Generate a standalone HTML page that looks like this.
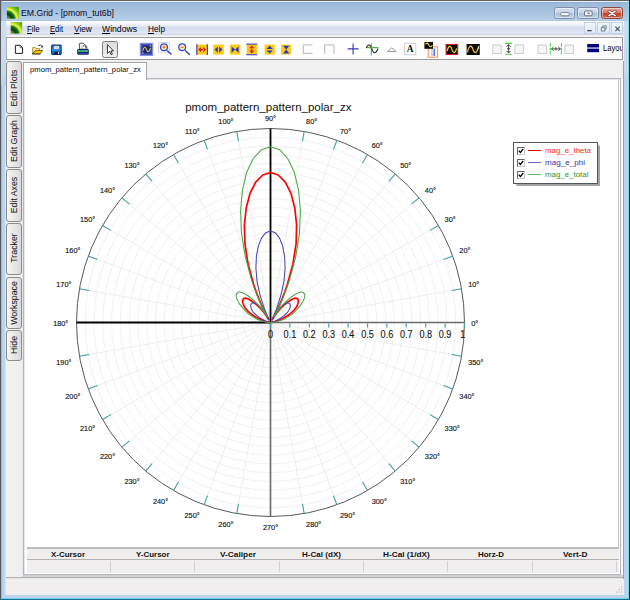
<!DOCTYPE html>
<html><head><meta charset="utf-8"><title>EM.Grid - [pmom_tut6b]</title>
<style>
html,body{margin:0;padding:0;}
body{width:630px;height:600px;overflow:hidden;position:relative;background:#b9d1ea;font-family:"Liberation Sans",sans-serif;font-size:12px;color:#000;}
.abs{position:absolute;}
#frame{left:0;top:0;width:630px;height:600px;background:#bcd3ec;}
#titlegrad{left:1px;top:2px;width:627px;height:19px;background:linear-gradient(#8fb0d4 0%,#9dbad9 10%,#a8c3e0 50%,#b6cfe9 93%,#a9c5e5 100%);}
#title{left:21px;top:5px;font-size:12px;color:#000;white-space:nowrap;letter-spacing:-0.1px;}
#menubar{left:6px;top:21px;width:618px;height:14px;background:linear-gradient(#fdfeff 0%,#f7f9fc 16%,#e6eaf5 34%,#d7ddee 48%,#d9dff0 60%,#e1e7f5 90%,#c6ccde 100%);}
.menu{top:22px;font-size:12px;white-space:nowrap;}
u{text-decoration-thickness:0.8px;text-underline-offset:0.6px;}
#tbwrap{left:6px;top:35px;width:618px;height:26px;background:#f2f2f2;}
#toolbar{left:6px;top:37px;width:616px;height:22px;background:#fff;border:1px solid #9a9a9a;border-top-color:#a0a0a0;border-left-color:#b0b0b0;box-sizing:border-box;height:23px;width:617px;}
#client{left:6px;top:60px;width:618px;height:535px;background:#f0f0f0;}
.vtab{left:6px;width:15.5px;border:1px solid #8c8c8c;border-radius:3px;background:linear-gradient(90deg,#f5f5f5,#dadada);box-sizing:border-box;}

#tab{left:23px;top:62px;width:124px;height:18px;background:#fff;border:1px solid #a4a4ac;border-bottom:none;box-sizing:border-box;}
#tabtxt{left:29px;top:64px;font-size:9.3px;white-space:nowrap;color:#111;}
#pane{left:23px;top:78px;width:598px;height:497px;box-sizing:border-box;border:1px solid #b4b4bc;background:#fff;}
#paneinner{left:26px;top:80px;width:593px;height:468px;box-sizing:border-box;border-right:1px solid #c6c6c6;background:#fff;}
#tblhead{left:27px;top:547px;width:592px;height:12px;background:#f0eded;border-top:2px solid #bcbcbc;box-sizing:border-box;}
#tblrow{left:27px;top:559px;width:592px;height:14px;background:#f0eeee;border-top:1px solid #b2b2b2;box-sizing:border-box;}
.th{top:549px;width:83px;text-align:center;font-weight:bold;font-size:9.6px;line-height:10px;color:#111;white-space:nowrap;}
.cs{top:561px;width:1px;height:11px;background:#d4d0d0;}
#status{left:6px;top:579px;width:618px;height:16px;background:#f0eeee;box-sizing:border-box;}
#legend{left:513px;top:142px;width:85px;height:41.5px;box-sizing:border-box;border:1px solid #555;background:#fff;box-shadow:1.5px 1.5px 1px #a4a4a4;}
.lg{left:18px;font-size:9px;white-space:nowrap;}
.cb{width:7.5px;height:7.5px;border:1px solid #666;border-right-color:#ccc;border-bottom-color:#ccc;box-sizing:border-box;background:#fff;}
.wb{top:7px;height:12px;box-sizing:border-box;border:1px solid #7f90a8;border-radius:2.5px;background:linear-gradient(#d3e0f0 0%,#c3d4ea 45%,#a9c0dd 52%,#b9cee6 100%);box-shadow:inset 0 0 0 1px rgba(255,255,255,0.45);}
.mb{top:22px;height:12px;box-sizing:border-box;border:1px solid #c3d1e2;background:linear-gradient(#f0f5fb,#dfe8f4);}
</style></head><body>
<div class="abs" id="frame"></div>
<div class="abs" id="titlegrad"></div>
<!-- outer borders -->
<div class="abs" style="left:0;top:0;width:630px;height:1px;background:#64625e"></div>
<div class="abs" style="left:0;top:0;width:1px;height:600px;background:#55595d"></div>
<div class="abs" style="left:1px;top:1px;width:627px;height:1px;background:#e4effa"></div>
<div class="abs" style="left:1px;top:1px;width:1px;height:598px;background:#a9b4c2"></div>
<div class="abs" style="left:5px;top:21px;width:1px;height:574px;background:#d9e6f4"></div>
<div class="abs" style="left:1px;top:21px;width:5px;height:65px;background:linear-gradient(#cfdff1,#c6d9ee 80%,#b9d1ea);"></div>
<div class="abs" style="left:624px;top:21px;width:4px;height:65px;background:linear-gradient(#cfdff1,#c6d9ee 80%,#b9d1ea);"></div>
<div class="abs" style="left:629px;top:0;width:1px;height:600px;background:#0e2230"></div>
<div class="abs" style="left:628px;top:1px;width:1px;height:598px;background:#7fd4fb"></div>
<div class="abs" style="left:0;top:599px;width:630px;height:1px;background:#1a6f8f"></div>
<div class="abs" style="left:1px;top:598px;width:628px;height:1px;background:#6fd0f5"></div>

<!-- title icon -->
<svg class="abs" style="left:6px;top:6px" width="14" height="14" viewBox="-1 -1 14 14"><defs><radialGradient id="ig" gradientUnits="userSpaceOnUse" cx="-0.5" cy="12.5" r="16"><stop offset="0" stop-color="#8aa028"/><stop offset="0.2" stop-color="#5c8a1c"/><stop offset="0.3" stop-color="#0a4412"/><stop offset="0.46" stop-color="#0e5a18"/><stop offset="0.55" stop-color="#3aa41e"/><stop offset="0.63" stop-color="#f4f23c"/><stop offset="0.7" stop-color="#d6ec30"/><stop offset="0.8" stop-color="#86cc18"/><stop offset="1" stop-color="#4c9c10"/></radialGradient></defs><rect x="-0.1" y="-0.1" width="12" height="11.8" fill="url(#ig)"/></svg>
<div class="abs" style="left:21.30px;top:9.45px;font-size:8.80px;line-height:1;white-space:nowrap;transform-origin:0 0;transform:scaleX(0.9904);color:#0a0a1e;">EM.Grid - [pmom_tut6b]</div>

<!-- window buttons -->
<div class="abs wb" style="left:554px;width:21px;"></div>
<div class="abs wb" style="left:577px;width:22px;"></div>
<div class="abs wb" style="left:601px;width:22px;border-color:#8a4a42;background:linear-gradient(#e4aa9e 0%,#d67e6c 45%,#c4442e 52%,#cf6048 100%);"></div>
<svg class="abs" style="left:550px;top:5px" width="76" height="16" viewBox="550 5 76 16">
<rect x="560.6" y="12.6" width="8.6" height="3.2" rx="1.2" fill="#fff" stroke="#6c7888" stroke-width="0.9"/>
<rect x="584.6" y="11" width="7.4" height="4.8" rx="0.8" fill="#fff" stroke="#566272" stroke-width="0.9"/>
<rect x="587.2" y="12.5" width="2.8" height="1.6" fill="#7f93b4"/>
<path d="M609 11.2 L615.2 15.6 M615.2 11.2 L609 15.6" stroke="#7a3028" stroke-width="2.8" stroke-linecap="round"/>
<path d="M609 11.2 L615.2 15.6 M615.2 11.2 L609 15.6" stroke="#fff" stroke-width="1.5" stroke-linecap="round"/>
</svg>
<!-- menubar -->
<div class="abs" id="menubar"></div>
<svg class="abs" style="left:10px;top:21px" width="14" height="14" viewBox="-1 -1 14 14"><rect x="-0.3" y="0.1" width="11.4" height="11.5" fill="url(#ig)"/></svg>
<div class="abs" style="left:27.40px;top:24.55px;font-size:8.80px;line-height:1;white-space:nowrap;transform-origin:0 0;transform:scaleX(0.8956);"><u>F</u>ile</div>
<div class="abs" style="left:49.70px;top:24.55px;font-size:8.80px;line-height:1;white-space:nowrap;transform-origin:0 0;transform:scaleX(0.8705);"><u>E</u>dit</div>
<div class="abs" style="left:74.10px;top:24.55px;font-size:8.80px;line-height:1;white-space:nowrap;transform-origin:0 0;transform:scaleX(0.9410);"><u>V</u>iew</div>
<div class="abs" style="left:102.00px;top:24.55px;font-size:8.80px;line-height:1;white-space:nowrap;transform-origin:0 0;transform:scaleX(0.9804);"><u>W</u>indows</div>
<div class="abs" style="left:148.00px;top:24.55px;font-size:8.80px;line-height:1;white-space:nowrap;transform-origin:0 0;transform:scaleX(0.9393);"><u>H</u>elp</div>
<!-- mdi buttons -->
<div class="abs mb" style="left:584px;width:12px;"></div>
<div class="abs mb" style="left:597px;width:13px;"></div>
<div class="abs mb" style="left:611px;width:12px;"></div>
<svg class="abs" style="left:584px;top:22px" width="40" height="13" viewBox="584 22 40 13">
<rect x="587.2" y="30" width="4.4" height="1.3" fill="#3c4c60"/>
<path d="M602.6 27.4 V25.9 H606.2 V29 H604.8 M601.3 27.6 H604.8 V31.1 H601.3 Z" fill="none" stroke="#64748c" stroke-width="0.85"/>
<path d="M615.4 26.6 L619.8 31.1 M619.8 26.6 L615.4 31.1" stroke="#44546a" stroke-width="1.15"/>
</svg>
<!-- toolbar -->
<div class="abs" id="tbwrap"></div>
<div class="abs" id="toolbar"></div>
<div class="abs" style="left:101.5px;top:40.5px;width:16.5px;height:17px;box-sizing:border-box;border:1px solid #7c7c7c;border-radius:2.5px;background:linear-gradient(#dcdcdc,#f0f0f0);"></div>
<svg class="abs" style="left:0;top:36px" width="630" height="26" viewBox="0 36 630 26">
<!-- new -->
<path d="M15.4 45.3 H20.2 L22.6 47.7 V53.4 H15.4 Z" fill="#fff" stroke="#222" stroke-width="1"/>
<path d="M20.2 45.3 V47.7 H22.6" fill="none" stroke="#444" stroke-width="0.8"/>
<!-- open -->
<path d="M32.6 53.6 V47.6 H35.4 L36.2 48.6 H39.6 V50.6" fill="#fae690" stroke="#8a7410" stroke-width="0.7" stroke-linejoin="round"/>
<path d="M32.4 53.8 L35 50.8 L42.6 50.3 L40.2 53.8 Z" fill="#f2ca08" stroke="#4a3a00" stroke-width="0.7" stroke-linejoin="round"/>
<path d="M32.2 54.1 H40.4" stroke="#2a2000" stroke-width="0.7"/>
<path d="M38.2 45.6 Q40.6 44.2 42.2 46.4" fill="none" stroke="#222" stroke-width="0.9"/>
<path d="M42.9 45.2 V47.4 H40.8 Z" fill="#111"/>
<!-- save -->
<defs><linearGradient id="sv" x1="0" y1="0" x2="0" y2="1"><stop offset="0" stop-color="#1a6ccc"/><stop offset="0.55" stop-color="#2294e4"/><stop offset="1" stop-color="#0c3cb0"/></linearGradient></defs>
<rect x="51.6" y="45" width="9.6" height="9.5" rx="0.6" fill="url(#sv)" stroke="#0c1c5c" stroke-width="0.9"/>
<rect x="54" y="46" width="5" height="3" fill="#f2f2f2" stroke="#9aa4b4" stroke-width="0.4"/>
<rect x="55.2" y="47.2" width="2.6" height="0.6" fill="#b0b0b0"/>
<rect x="54.6" y="51.7" width="5.2" height="2.8" fill="#1c1c2c"/>
<rect x="58" y="52.1" width="1.1" height="2" fill="#f0f0f0"/>
<!-- print -->
<path d="M79.4 49.2 V44 Q79.4 43.2 80.2 43.2 H83.4 L86.8 46.6 V49.2 Z" fill="#f4f4f4" stroke="#2a2a2a" stroke-width="0.8" stroke-linejoin="round"/>
<rect x="83.3" y="45.3" width="1.1" height="1.1" fill="#111"/><rect x="85" y="46.4" width="1.1" height="1.1" fill="#111"/>
<rect x="81" y="45.6" width="1.6" height="2.4" fill="#d8d8d8"/>
<rect x="77.2" y="49" width="11.6" height="5.7" rx="1.2" fill="#14205e"/>
<rect x="77.8" y="50.1" width="10.4" height="1.8" fill="#2cc07c"/>
<rect x="85.4" y="50.2" width="1.5" height="1.6" fill="#9a8cb8"/>
<rect x="78" y="53" width="10" height="0.8" fill="#3454c4"/>
<!-- pointer -->
<path d="M107.4 44.6 V53.4 L109.6 51.4 L111.2 54.8 L112.4 54.2 L110.9 50.9 H113.6 Z" fill="#fff" stroke="#222" stroke-width="0.9" stroke-linejoin="round"/>
<!-- sine blue -->
<rect x="140.5" y="43.5" width="12" height="11.8" fill="#18248e" stroke="#8290ec" stroke-width="1.5"/>
<rect x="142" y="45" width="9" height="8.8" fill="none" stroke="#6a74b4" stroke-width="0.5"/>
<path d="M142.8 50.8 C143.6 46.4 145.6 46.2 146.5 49.4 C147.4 52.8 149.4 52.8 150.3 48.2" fill="none" stroke="#f0cc18" stroke-width="1.05"/>
<rect x="142.2" y="52.4" width="1.4" height="1.1" fill="#f0cc18"/><rect x="149.6" y="45.4" width="1.4" height="1.1" fill="#f0cc18"/>
<!-- zoom in -->
<rect x="158.6" y="42.6" width="10.8" height="9.6" fill="#fafafa" stroke="#d0d0d0" stroke-width="0.8"/>
<circle cx="164" cy="47.2" r="3.4" fill="#fff0c4" stroke="#3446d4" stroke-width="1.3"/>
<path d="M162.4 47.2 H165.6 M164 45.6 V48.8" stroke="#f07818" stroke-width="1.2"/>
<path d="M166.6 50 L168 51.4" stroke="#30a040" stroke-width="1.4"/>
<path d="M167.8 51.2 L171.4 54.6" stroke="#2c3cc8" stroke-width="1.4"/>
<!-- zoom out -->
<circle cx="182.2" cy="47.2" r="3.4" fill="#fff0c4" stroke="#3446d4" stroke-width="1.3"/>
<path d="M180.6 47.2 H183.8" stroke="#f07818" stroke-width="1.2"/>
<path d="M184.8 50 L186.2 51.4" stroke="#30a040" stroke-width="1.4"/>
<path d="M186 51.2 L189.8 54.8" stroke="#2c3cc8" stroke-width="1.4"/>
<!-- yellow icons -->
<rect x="196.5" y="44.6" width="11.3" height="10" fill="#fcca18"/>
<rect x="196.3" y="44.2" width="1.2" height="10.8" fill="#3c48c8"/><rect x="206.8" y="44.2" width="1.2" height="10.8" fill="#3c48c8"/>
<path d="M198.2 49.6 L201 47 V52.2 Z M206 49.6 L203.2 47 V52.2 Z M200.5 49 H204 V50.2 H200.5 Z" fill="#e01818"/>
<rect x="213.2" y="44.6" width="10.6" height="10" fill="#fcca18"/>
<path d="M214.6 49.6 L217.8 46.4 V52.8 Z M222.4 49.6 L219.2 46.4 V52.8 Z" fill="#2838c8"/>
<rect x="229.8" y="44.6" width="10.6" height="10" fill="#fcca18"/>
<path d="M231.6 46.4 L235.1 49.6 L231.6 52.8 Z M238.6 46.4 L235.1 49.6 L238.6 52.8 Z" fill="#2838c8"/>
<rect x="246.7" y="44" width="10.2" height="10.8" fill="#fcca18"/>
<rect x="246.2" y="43.6" width="11.2" height="1.1" fill="#3c48c8"/><rect x="246.2" y="54.2" width="11.2" height="1.1" fill="#3c48c8"/>
<path d="M251.8 45.4 L249.2 48.2 H254.4 Z M251.8 53.4 L249.2 50.6 H254.4 Z M251.2 47.8 H252.4 V51 H251.2 Z" fill="#e01818"/>
<rect x="264.6" y="44.6" width="10.2" height="10" fill="#fcca18"/>
<path d="M269.7 45.8 L266.4 49 H273 Z M269.7 53.6 L266.4 50.4 H273 Z" fill="#2838c8"/>
<rect x="281.1" y="44.6" width="10.2" height="10" fill="#fcca18"/>
<path d="M283 45.8 H289.4 L286.2 49.6 Z M283 53.6 H289.4 L286.2 49.6 Z" fill="#2838c8"/>
<!-- brackets -->
<path d="M312.5 44.9 H303.3 V53.4 H312.5" fill="none" stroke="#b4b4b4" stroke-width="1"/>
<path d="M324.7 53.8 V44.9 H334 V53.8" fill="none" stroke="#b4b4b4" stroke-width="1"/>
<!-- plus -->
<path d="M347.6 48.9 H358.6 M353.1 43.4 V54.4" stroke="#3434b8" stroke-width="1.1"/>
<!-- axes sine -->
<path d="M371.3 43.6 V55.6 M366 47.6 H378.4" stroke="#38c050" stroke-width="1.1"/>
<path d="M366.2 47.8 C367.6 44.4 369.6 44 371 47 C372.6 51 373.6 53.6 375.6 52.4 C376.8 51.6 377.4 50 378 48.6" fill="none" stroke="#222" stroke-width="1.1"/>
<rect x="370.5" y="46.8" width="1.7" height="1.7" fill="#f08020"/>
<!-- triangle -->
<path d="M387.4 51.6 L391.8 47.8 L396.2 51.6 Z" fill="none" stroke="#8c8c8c" stroke-width="0.9"/>
<!-- A box -->
<rect x="404.6" y="43.3" width="11.2" height="11.5" fill="#fff" stroke="#c8c8c8" stroke-width="0.9"/>
<text x="410.2" y="52.4" font-family="Liberation Serif, serif" font-weight="bold" font-size="9.4" text-anchor="middle" fill="#111">A</text>
<!-- black/orange -->
<rect x="428.2" y="46.8" width="9.4" height="10.4" fill="#fff" stroke="#f09050" stroke-width="1"/>
<path d="M432 48.6 V56" stroke="#a8b4f0" stroke-width="1.2"/><path d="M434.2 48.6 V56" stroke="#3c48c8" stroke-width="1.2"/>
<rect x="424.4" y="42" width="8.6" height="6.8" fill="#0a0a0a"/>
<path d="M425.4 44.4 C426.6 42.4 427.8 42.8 428.6 44.8 C429.6 47.2 431 47.4 432.4 45.4" fill="none" stroke="#f0d020" stroke-width="1.1"/>
<!-- red sine box -->
<rect x="446.1" y="44.5" width="11.6" height="10" fill="#0a0a0a" stroke="#d42020" stroke-width="1.1"/>
<path d="M447.2 51 C448.4 45.4 450.6 45 451.8 49.2 C453 53.6 455.2 54 456.6 48.4" fill="none" stroke="#e8d020" stroke-width="1.2"/>
<!-- black sine box -->
<rect x="466.6" y="44" width="13.2" height="11" fill="#0a0a0a"/>
<path d="M467.4 52.4 C469 45 471.4 44.6 472.8 49 C474.4 54 476.8 54 478.6 46.6" fill="none" stroke="#e8b820" stroke-width="1.3"/>
<path d="M470 47.2 C470.8 45.6 471.6 46 472.2 47.6 M477.6 49.6 L479 46" fill="none" stroke="#f4f4f4" stroke-width="0.8"/>
<!-- small squares and arrows -->
<rect x="492.8" y="45" width="8.4" height="8.4" fill="#f6f6f6" stroke="#c6c6c6" stroke-width="0.9"/>
<rect x="514.9" y="45" width="8.4" height="8.4" fill="#f6f6f6" stroke="#c6c6c6" stroke-width="0.9"/>
<rect x="538" y="45" width="8.4" height="8.4" fill="#f6f6f6" stroke="#c6c6c6" stroke-width="0.9"/>
<rect x="564.9" y="45" width="8.4" height="8.4" fill="#f6f6f6" stroke="#c6c6c6" stroke-width="0.9"/>
<path d="M505 43.4 H512.2 M505 54.2 H512.2" stroke="#40d040" stroke-width="1.1"/>
<path d="M508.6 44.8 V52.8 M506.6 46.8 L508.6 44.6 L510.6 46.8 M506.6 50.8 L508.6 53 L510.6 50.8 M506.9 48.8 H510.3" fill="none" stroke="#333" stroke-width="0.9"/>
<path d="M550.3 43.6 V54.2 M561.4 43.6 V54.2" stroke="#40d040" stroke-width="1.1" stroke-dasharray="3 0.8"/>
<path d="M551.6 48.9 H560.2 M553.6 46.9 L551.5 48.9 L553.6 50.9 M558.2 46.9 L560.3 48.9 L558.2 50.9 M555.9 47.2 V50.6" fill="none" stroke="#333" stroke-width="0.9"/>
<!-- navy bars -->
<rect x="587.2" y="44" width="11.8" height="3.5" fill="#00007c"/><rect x="587.2" y="48.6" width="11.8" height="3.6" fill="#00007c"/>
</svg>
<div class="abs" style="left:600px;top:40px;width:22px;height:16px;overflow:hidden"><div class="abs" style="left:2.60px;top:3.75px;font-size:8.80px;line-height:1;white-space:nowrap;transform-origin:0 0;transform:scaleX(0.8591);">Layou</div><span style="position:absolute;left:23.6px;top:3.75px;font-size:8.8px;line-height:1">t</span></div>


<!-- client -->
<div class="abs" id="client"></div>
<div class="abs vtab" style="top:61px;height:53px"></div>
<div class="abs" style="left:13.8px;top:88.00px;font-size:8.76px;line-height:1;white-space:nowrap;color:#111;transform:translate(-50%,-50%) rotate(-90deg) scaleX(1.0000)">Edit Plots</div>
<div class="abs vtab" style="top:115px;height:53px"></div>
<div class="abs" style="left:13.8px;top:141.30px;font-size:8.76px;line-height:1;white-space:nowrap;color:#111;transform:translate(-50%,-50%) rotate(-90deg) scaleX(1.0000)">Edit Graph</div>
<div class="abs vtab" style="top:169px;height:52.5px"></div>
<div class="abs" style="left:13.8px;top:195.10px;font-size:8.76px;line-height:1;white-space:nowrap;color:#111;transform:translate(-50%,-50%) rotate(-90deg) scaleX(1.0000)">Edit Axes</div>
<div class="abs vtab" style="top:223px;height:52px"></div>
<div class="abs" style="left:13.8px;top:248.40px;font-size:8.76px;line-height:1;white-space:nowrap;color:#111;transform:translate(-50%,-50%) rotate(-90deg) scaleX(1.0000)">Tracker</div>
<div class="abs vtab" style="top:276.5px;height:52px"></div>
<div class="abs" style="left:13.8px;top:302.60px;font-size:8.76px;line-height:1;white-space:nowrap;color:#111;transform:translate(-50%,-50%) rotate(-90deg) scaleX(1.0000)">Workspace</div>
<div class="abs vtab" style="top:330px;height:31px"></div>
<div class="abs" style="left:13.8px;top:345.30px;font-size:8.76px;line-height:1;white-space:nowrap;color:#111;transform:translate(-50%,-50%) rotate(-90deg) scaleX(1.0000)">Hide</div>

<div class="abs" style="left:22px;top:575px;width:601px;height:2px;background:#d0d0d0"></div>
<div class="abs" style="left:6px;top:577px;width:618px;height:1px;background:#b2b2b2"></div>
<div class="abs" style="left:6px;top:578px;width:618px;height:1px;background:#e4e4e4"></div>
<div class="abs" style="left:22px;top:79px;width:1px;height:497px;background:#e6e6ea"></div>
<div class="abs" style="left:621px;top:79px;width:2px;height:496px;background:#f8f8f8"></div>
<div class="abs" style="left:623px;top:61px;width:1px;height:534px;background:#a0a0a0"></div>
<div class="abs" id="pane"></div>
<div class="abs" style="left:24px;top:79px;width:1px;height:495px;background:#e8e8ec"></div>
<div class="abs" style="left:24px;top:79px;width:596px;height:1px;background:#e4e4e8"></div>
<div class="abs" id="tab"></div>
<div class="abs" style="left:29.70px;top:66.41px;font-size:7.90px;line-height:1;white-space:nowrap;transform-origin:0 0;transform:scaleX(0.9721);color:#0a0a18;">pmom_pattern_pattern_polar_zx</div>
<div class="abs" id="paneinner"></div>
<svg width="630" height="600" viewBox="0 0 630 600" style="position:absolute;left:0;top:0" font-family="Liberation Sans, sans-serif">
<circle cx="270.5" cy="322.5" r="185.24" fill="none" stroke="#eeeeee" stroke-width="0.8"/>
<circle cx="270.5" cy="322.5" r="176.48" fill="none" stroke="#eeeeee" stroke-width="0.8"/>
<circle cx="270.5" cy="322.5" r="167.72" fill="none" stroke="#eeeeee" stroke-width="0.8"/>
<circle cx="270.5" cy="322.5" r="158.96" fill="none" stroke="#eeeeee" stroke-width="0.8"/>
<circle cx="270.5" cy="322.5" r="150.20" fill="none" stroke="#eeeeee" stroke-width="0.8"/>
<circle cx="270.5" cy="322.5" r="141.44" fill="none" stroke="#eeeeee" stroke-width="0.8"/>
<circle cx="270.5" cy="322.5" r="132.68" fill="none" stroke="#eeeeee" stroke-width="0.8"/>
<circle cx="270.5" cy="322.5" r="123.92" fill="none" stroke="#eeeeee" stroke-width="0.8"/>
<circle cx="270.5" cy="322.5" r="115.16" fill="none" stroke="#eeeeee" stroke-width="0.8"/>
<circle cx="270.5" cy="322.5" r="106.40" fill="none" stroke="#eeeeee" stroke-width="0.8"/>
<circle cx="270.5" cy="322.5" r="97.64" fill="none" stroke="#eeeeee" stroke-width="0.8"/>
<circle cx="270.5" cy="322.5" r="88.88" fill="none" stroke="#eeeeee" stroke-width="0.8"/>
<circle cx="270.5" cy="322.5" r="80.12" fill="none" stroke="#eeeeee" stroke-width="0.8"/>
<circle cx="270.5" cy="322.5" r="71.36" fill="none" stroke="#eeeeee" stroke-width="0.8"/>
<circle cx="270.5" cy="322.5" r="62.60" fill="none" stroke="#eeeeee" stroke-width="0.8"/>
<circle cx="270.5" cy="322.5" r="53.84" fill="none" stroke="#eeeeee" stroke-width="0.8"/>
<circle cx="270.5" cy="322.5" r="45.08" fill="none" stroke="#eeeeee" stroke-width="0.8"/>
<circle cx="270.5" cy="322.5" r="36.32" fill="none" stroke="#eeeeee" stroke-width="0.8"/>
<circle cx="270.5" cy="322.5" r="27.56" fill="none" stroke="#eeeeee" stroke-width="0.8"/>
<circle cx="270.5" cy="322.5" r="18.80" fill="none" stroke="#eeeeee" stroke-width="0.8"/>
<circle cx="270.5" cy="322.5" r="10.04" fill="none" stroke="#eeeeee" stroke-width="0.8"/>
<circle cx="270.5" cy="322.5" r="1.28" fill="none" stroke="#eeeeee" stroke-width="0.8"/>
<line x1="270.5" y1="322.5" x2="461.6" y2="288.8" stroke="#eaeaea" stroke-width="0.8"/>
<line x1="270.5" y1="322.5" x2="452.8" y2="256.1" stroke="#eaeaea" stroke-width="0.8"/>
<line x1="270.5" y1="322.5" x2="438.5" y2="225.5" stroke="#eaeaea" stroke-width="0.8"/>
<line x1="270.5" y1="322.5" x2="419.1" y2="197.8" stroke="#eaeaea" stroke-width="0.8"/>
<line x1="270.5" y1="322.5" x2="395.2" y2="173.9" stroke="#eaeaea" stroke-width="0.8"/>
<line x1="270.5" y1="322.5" x2="367.5" y2="154.5" stroke="#eaeaea" stroke-width="0.8"/>
<line x1="270.5" y1="322.5" x2="336.9" y2="140.2" stroke="#eaeaea" stroke-width="0.8"/>
<line x1="270.5" y1="322.5" x2="304.2" y2="131.4" stroke="#eaeaea" stroke-width="0.8"/>
<line x1="270.5" y1="322.5" x2="236.8" y2="131.4" stroke="#eaeaea" stroke-width="0.8"/>
<line x1="270.5" y1="322.5" x2="204.1" y2="140.2" stroke="#eaeaea" stroke-width="0.8"/>
<line x1="270.5" y1="322.5" x2="173.5" y2="154.5" stroke="#eaeaea" stroke-width="0.8"/>
<line x1="270.5" y1="322.5" x2="145.8" y2="173.9" stroke="#eaeaea" stroke-width="0.8"/>
<line x1="270.5" y1="322.5" x2="121.9" y2="197.8" stroke="#eaeaea" stroke-width="0.8"/>
<line x1="270.5" y1="322.5" x2="102.5" y2="225.5" stroke="#eaeaea" stroke-width="0.8"/>
<line x1="270.5" y1="322.5" x2="88.2" y2="256.1" stroke="#eaeaea" stroke-width="0.8"/>
<line x1="270.5" y1="322.5" x2="79.4" y2="288.8" stroke="#eaeaea" stroke-width="0.8"/>
<line x1="270.5" y1="322.5" x2="79.4" y2="356.2" stroke="#eaeaea" stroke-width="0.8"/>
<line x1="270.5" y1="322.5" x2="88.2" y2="388.9" stroke="#eaeaea" stroke-width="0.8"/>
<line x1="270.5" y1="322.5" x2="102.5" y2="419.5" stroke="#eaeaea" stroke-width="0.8"/>
<line x1="270.5" y1="322.5" x2="121.9" y2="447.2" stroke="#eaeaea" stroke-width="0.8"/>
<line x1="270.5" y1="322.5" x2="145.8" y2="471.1" stroke="#eaeaea" stroke-width="0.8"/>
<line x1="270.5" y1="322.5" x2="173.5" y2="490.5" stroke="#eaeaea" stroke-width="0.8"/>
<line x1="270.5" y1="322.5" x2="204.1" y2="504.8" stroke="#eaeaea" stroke-width="0.8"/>
<line x1="270.5" y1="322.5" x2="236.8" y2="513.6" stroke="#eaeaea" stroke-width="0.8"/>
<line x1="270.5" y1="322.5" x2="304.2" y2="513.6" stroke="#eaeaea" stroke-width="0.8"/>
<line x1="270.5" y1="322.5" x2="336.9" y2="504.8" stroke="#eaeaea" stroke-width="0.8"/>
<line x1="270.5" y1="322.5" x2="367.5" y2="490.5" stroke="#eaeaea" stroke-width="0.8"/>
<line x1="270.5" y1="322.5" x2="395.2" y2="471.1" stroke="#eaeaea" stroke-width="0.8"/>
<line x1="270.5" y1="322.5" x2="419.1" y2="447.2" stroke="#eaeaea" stroke-width="0.8"/>
<line x1="270.5" y1="322.5" x2="438.5" y2="419.5" stroke="#eaeaea" stroke-width="0.8"/>
<line x1="270.5" y1="322.5" x2="452.8" y2="388.9" stroke="#eaeaea" stroke-width="0.8"/>
<line x1="270.5" y1="322.5" x2="461.6" y2="356.2" stroke="#eaeaea" stroke-width="0.8"/>
<circle cx="270.5" cy="322.5" r="194.0" fill="none" stroke="#585858" stroke-width="1.0"/>
<line x1="461.6" y1="288.8" x2="451.9" y2="290.5" stroke="#3f9f9f" stroke-width="1.05"/>
<line x1="452.8" y1="256.1" x2="443.6" y2="259.5" stroke="#3f9f9f" stroke-width="1.05"/>
<line x1="438.5" y1="225.5" x2="430.0" y2="230.4" stroke="#3f9f9f" stroke-width="1.05"/>
<line x1="419.1" y1="197.8" x2="411.6" y2="204.1" stroke="#3f9f9f" stroke-width="1.05"/>
<line x1="395.2" y1="173.9" x2="388.9" y2="181.4" stroke="#3f9f9f" stroke-width="1.05"/>
<line x1="367.5" y1="154.5" x2="362.6" y2="163.0" stroke="#3f9f9f" stroke-width="1.05"/>
<line x1="336.9" y1="140.2" x2="333.5" y2="149.4" stroke="#3f9f9f" stroke-width="1.05"/>
<line x1="304.2" y1="131.4" x2="302.5" y2="141.1" stroke="#3f9f9f" stroke-width="1.05"/>
<line x1="236.8" y1="131.4" x2="238.5" y2="141.1" stroke="#3f9f9f" stroke-width="1.05"/>
<line x1="204.1" y1="140.2" x2="207.5" y2="149.4" stroke="#3f9f9f" stroke-width="1.05"/>
<line x1="173.5" y1="154.5" x2="178.4" y2="163.0" stroke="#3f9f9f" stroke-width="1.05"/>
<line x1="145.8" y1="173.9" x2="152.1" y2="181.4" stroke="#3f9f9f" stroke-width="1.05"/>
<line x1="121.9" y1="197.8" x2="129.4" y2="204.1" stroke="#3f9f9f" stroke-width="1.05"/>
<line x1="102.5" y1="225.5" x2="111.0" y2="230.4" stroke="#3f9f9f" stroke-width="1.05"/>
<line x1="88.2" y1="256.1" x2="97.4" y2="259.5" stroke="#3f9f9f" stroke-width="1.05"/>
<line x1="79.4" y1="288.8" x2="89.1" y2="290.5" stroke="#3f9f9f" stroke-width="1.05"/>
<line x1="79.4" y1="356.2" x2="89.1" y2="354.5" stroke="#3f9f9f" stroke-width="1.05"/>
<line x1="88.2" y1="388.9" x2="97.4" y2="385.5" stroke="#3f9f9f" stroke-width="1.05"/>
<line x1="102.5" y1="419.5" x2="111.0" y2="414.6" stroke="#3f9f9f" stroke-width="1.05"/>
<line x1="121.9" y1="447.2" x2="129.4" y2="440.9" stroke="#3f9f9f" stroke-width="1.05"/>
<line x1="145.8" y1="471.1" x2="152.1" y2="463.6" stroke="#3f9f9f" stroke-width="1.05"/>
<line x1="173.5" y1="490.5" x2="178.4" y2="482.0" stroke="#3f9f9f" stroke-width="1.05"/>
<line x1="204.1" y1="504.8" x2="207.5" y2="495.6" stroke="#3f9f9f" stroke-width="1.05"/>
<line x1="236.8" y1="513.6" x2="238.5" y2="503.9" stroke="#3f9f9f" stroke-width="1.05"/>
<line x1="304.2" y1="513.6" x2="302.5" y2="503.9" stroke="#3f9f9f" stroke-width="1.05"/>
<line x1="336.9" y1="504.8" x2="333.5" y2="495.6" stroke="#3f9f9f" stroke-width="1.05"/>
<line x1="367.5" y1="490.5" x2="362.6" y2="482.0" stroke="#3f9f9f" stroke-width="1.05"/>
<line x1="395.2" y1="471.1" x2="388.9" y2="463.6" stroke="#3f9f9f" stroke-width="1.05"/>
<line x1="419.1" y1="447.2" x2="411.6" y2="440.9" stroke="#3f9f9f" stroke-width="1.05"/>
<line x1="438.5" y1="419.5" x2="430.0" y2="414.6" stroke="#3f9f9f" stroke-width="1.05"/>
<line x1="452.8" y1="388.9" x2="443.6" y2="385.5" stroke="#3f9f9f" stroke-width="1.05"/>
<line x1="461.6" y1="356.2" x2="451.9" y2="354.5" stroke="#3f9f9f" stroke-width="1.05"/>
<line x1="76.5" y1="322.5" x2="270.5" y2="322.5" stroke="#000" stroke-width="1.8"/>
<line x1="270.5" y1="128.5" x2="270.5" y2="322.5" stroke="#000" stroke-width="1.8"/>
<line x1="270.5" y1="322.5" x2="464.5" y2="322.5" stroke="#6a6a6a" stroke-width="1.6"/>
<line x1="270.5" y1="322.5" x2="270.5" y2="516.5" stroke="#6a6a6a" stroke-width="1.6"/>
<line x1="270.5" y1="323.5" x2="270.5" y2="327.5" stroke="#45a3a3" stroke-width="1.2"/>
<text transform="translate(270.5 337.8) scale(0.9 1)" font-size="10.1" text-anchor="middle" fill="#161616" stroke="#161616" stroke-width="0.12">0</text>
<line x1="289.9" y1="323.5" x2="289.9" y2="327.5" stroke="#45a3a3" stroke-width="1.2"/>
<text transform="translate(289.9 337.8) scale(0.9 1)" font-size="10.1" text-anchor="middle" fill="#161616" stroke="#161616" stroke-width="0.12">0.1</text>
<line x1="309.3" y1="323.5" x2="309.3" y2="327.5" stroke="#45a3a3" stroke-width="1.2"/>
<text transform="translate(309.3 337.8) scale(0.9 1)" font-size="10.1" text-anchor="middle" fill="#161616" stroke="#161616" stroke-width="0.12">0.2</text>
<line x1="328.7" y1="323.5" x2="328.7" y2="327.5" stroke="#45a3a3" stroke-width="1.2"/>
<text transform="translate(328.7 337.8) scale(0.9 1)" font-size="10.1" text-anchor="middle" fill="#161616" stroke="#161616" stroke-width="0.12">0.3</text>
<line x1="348.1" y1="323.5" x2="348.1" y2="327.5" stroke="#45a3a3" stroke-width="1.2"/>
<text transform="translate(348.1 337.8) scale(0.9 1)" font-size="10.1" text-anchor="middle" fill="#161616" stroke="#161616" stroke-width="0.12">0.4</text>
<line x1="367.5" y1="323.5" x2="367.5" y2="327.5" stroke="#45a3a3" stroke-width="1.2"/>
<text transform="translate(367.5 337.8) scale(0.9 1)" font-size="10.1" text-anchor="middle" fill="#161616" stroke="#161616" stroke-width="0.12">0.5</text>
<line x1="386.9" y1="323.5" x2="386.9" y2="327.5" stroke="#45a3a3" stroke-width="1.2"/>
<text transform="translate(386.9 337.8) scale(0.9 1)" font-size="10.1" text-anchor="middle" fill="#161616" stroke="#161616" stroke-width="0.12">0.6</text>
<line x1="406.3" y1="323.5" x2="406.3" y2="327.5" stroke="#45a3a3" stroke-width="1.2"/>
<text transform="translate(406.3 337.8) scale(0.9 1)" font-size="10.1" text-anchor="middle" fill="#161616" stroke="#161616" stroke-width="0.12">0.7</text>
<line x1="425.7" y1="323.5" x2="425.7" y2="327.5" stroke="#45a3a3" stroke-width="1.2"/>
<text transform="translate(425.7 337.8) scale(0.9 1)" font-size="10.1" text-anchor="middle" fill="#161616" stroke="#161616" stroke-width="0.12">0.8</text>
<line x1="445.1" y1="323.5" x2="445.1" y2="327.5" stroke="#45a3a3" stroke-width="1.2"/>
<text transform="translate(445.1 337.8) scale(0.9 1)" font-size="10.1" text-anchor="middle" fill="#161616" stroke="#161616" stroke-width="0.12">0.9</text>
<line x1="464.5" y1="323.5" x2="464.5" y2="327.5" stroke="#45a3a3" stroke-width="1.2"/>
<text transform="translate(465.3 337.8) scale(0.9 1)" font-size="10.1" text-anchor="end" fill="#161616" stroke="#161616" stroke-width="0.12">1</text>
<text transform="translate(471.2 325.9) scale(0.93 1)" font-size="7.9" text-anchor="start" fill="#141414" stroke="#141414" stroke-width="0.15">0°</text>
<text transform="translate(468.2 287.1) scale(0.93 1)" font-size="7.9" text-anchor="start" fill="#141414" stroke="#141414" stroke-width="0.15">10°</text>
<text transform="translate(459.3 253.3) scale(0.93 1)" font-size="7.9" text-anchor="start" fill="#141414" stroke="#141414" stroke-width="0.15">20°</text>
<text transform="translate(444.6 221.7) scale(0.93 1)" font-size="7.9" text-anchor="start" fill="#141414" stroke="#141414" stroke-width="0.15">30°</text>
<text transform="translate(424.8 193.0) scale(0.93 1)" font-size="7.9" text-anchor="start" fill="#141414" stroke="#141414" stroke-width="0.15">40°</text>
<text transform="translate(400.2 168.3) scale(0.93 1)" font-size="7.9" text-anchor="start" fill="#141414" stroke="#141414" stroke-width="0.15">50°</text>
<text transform="translate(371.7 148.3) scale(0.93 1)" font-size="7.9" text-anchor="start" fill="#141414" stroke="#141414" stroke-width="0.15">60°</text>
<text transform="translate(340.0 133.5) scale(0.93 1)" font-size="7.9" text-anchor="start" fill="#141414" stroke="#141414" stroke-width="0.15">70°</text>
<text transform="translate(306.1 124.4) scale(0.93 1)" font-size="7.9" text-anchor="start" fill="#141414" stroke="#141414" stroke-width="0.15">80°</text>
<text transform="translate(270.5 121.4) scale(0.93 1)" font-size="7.9" text-anchor="middle" fill="#141414" stroke="#141414" stroke-width="0.15">90°</text>
<text transform="translate(233.5 124.4) scale(0.93 1)" font-size="7.9" text-anchor="end" fill="#141414" stroke="#141414" stroke-width="0.15">100°</text>
<text transform="translate(199.7 133.5) scale(0.93 1)" font-size="7.9" text-anchor="end" fill="#141414" stroke="#141414" stroke-width="0.15">110°</text>
<text transform="translate(168.1 148.3) scale(0.93 1)" font-size="7.9" text-anchor="end" fill="#141414" stroke="#141414" stroke-width="0.15">120°</text>
<text transform="translate(139.6 168.3) scale(0.93 1)" font-size="7.9" text-anchor="end" fill="#141414" stroke="#141414" stroke-width="0.15">130°</text>
<text transform="translate(115.1 193.0) scale(0.93 1)" font-size="7.9" text-anchor="end" fill="#141414" stroke="#141414" stroke-width="0.15">140°</text>
<text transform="translate(95.2 221.7) scale(0.93 1)" font-size="7.9" text-anchor="end" fill="#141414" stroke="#141414" stroke-width="0.15">150°</text>
<text transform="translate(80.4 253.3) scale(0.93 1)" font-size="7.9" text-anchor="end" fill="#141414" stroke="#141414" stroke-width="0.15">160°</text>
<text transform="translate(71.4 287.1) scale(0.93 1)" font-size="7.9" text-anchor="end" fill="#141414" stroke="#141414" stroke-width="0.15">170°</text>
<text transform="translate(68.3 325.9) scale(0.93 1)" font-size="7.9" text-anchor="end" fill="#141414" stroke="#141414" stroke-width="0.15">180°</text>
<text transform="translate(71.4 364.7) scale(0.93 1)" font-size="7.9" text-anchor="end" fill="#141414" stroke="#141414" stroke-width="0.15">190°</text>
<text transform="translate(80.4 398.8) scale(0.93 1)" font-size="7.9" text-anchor="end" fill="#141414" stroke="#141414" stroke-width="0.15">200°</text>
<text transform="translate(95.2 430.8) scale(0.93 1)" font-size="7.9" text-anchor="end" fill="#141414" stroke="#141414" stroke-width="0.15">210°</text>
<text transform="translate(115.1 459.2) scale(0.93 1)" font-size="7.9" text-anchor="end" fill="#141414" stroke="#141414" stroke-width="0.15">220°</text>
<text transform="translate(139.6 483.7) scale(0.93 1)" font-size="7.9" text-anchor="end" fill="#141414" stroke="#141414" stroke-width="0.15">230°</text>
<text transform="translate(168.1 503.6) scale(0.93 1)" font-size="7.9" text-anchor="end" fill="#141414" stroke="#141414" stroke-width="0.15">240°</text>
<text transform="translate(199.7 518.3) scale(0.93 1)" font-size="7.9" text-anchor="end" fill="#141414" stroke="#141414" stroke-width="0.15">250°</text>
<text transform="translate(233.5 527.3) scale(0.93 1)" font-size="7.9" text-anchor="end" fill="#141414" stroke="#141414" stroke-width="0.15">260°</text>
<text transform="translate(270.5 530.3) scale(0.93 1)" font-size="7.9" text-anchor="middle" fill="#141414" stroke="#141414" stroke-width="0.15">270°</text>
<text transform="translate(306.1 527.3) scale(0.93 1)" font-size="7.9" text-anchor="start" fill="#141414" stroke="#141414" stroke-width="0.15">280°</text>
<text transform="translate(340.0 518.3) scale(0.93 1)" font-size="7.9" text-anchor="start" fill="#141414" stroke="#141414" stroke-width="0.15">290°</text>
<text transform="translate(371.7 503.6) scale(0.93 1)" font-size="7.9" text-anchor="start" fill="#141414" stroke="#141414" stroke-width="0.15">300°</text>
<text transform="translate(400.2 483.7) scale(0.93 1)" font-size="7.9" text-anchor="start" fill="#141414" stroke="#141414" stroke-width="0.15">310°</text>
<text transform="translate(424.8 459.2) scale(0.93 1)" font-size="7.9" text-anchor="start" fill="#141414" stroke="#141414" stroke-width="0.15">320°</text>
<text transform="translate(444.6 430.8) scale(0.93 1)" font-size="7.9" text-anchor="start" fill="#141414" stroke="#141414" stroke-width="0.15">330°</text>
<text transform="translate(459.3 398.8) scale(0.93 1)" font-size="7.9" text-anchor="start" fill="#141414" stroke="#141414" stroke-width="0.15">340°</text>
<text transform="translate(468.2 364.7) scale(0.93 1)" font-size="7.9" text-anchor="start" fill="#141414" stroke="#141414" stroke-width="0.15">350°</text>
<path d="M270.5 322.5 L270.7 322.5 L270.8 322.5 L271.0 322.5 L271.1 322.5 L271.4 322.4 L271.6 322.4 L272.0 322.3 L272.6 322.2 L273.2 322.1 L273.8 321.9 L274.6 321.7 L275.4 321.5 L276.2 321.2 L277.1 320.9 L278.0 320.5 L279.1 320.0 L280.3 319.5 L281.5 318.9 L282.9 318.2 L284.4 317.4 L286.0 316.6 L287.4 315.7 L288.8 314.7 L290.2 313.7 L291.5 312.7 L292.6 311.7 L293.6 310.7 L294.4 309.8 L295.1 308.8 L295.8 307.9 L296.4 307.0 L296.9 306.0 L297.4 305.1 L297.7 304.1 L298.0 303.2 L298.2 302.4 L298.3 301.5 L298.3 300.8 L298.2 300.1 L297.9 299.5 L297.6 298.9 L297.1 298.5 L296.5 298.3 L295.7 298.2 L294.6 298.4 L293.4 298.8 L291.9 299.6 L290.3 300.5 L288.8 301.4 L287.4 302.4 L285.9 303.5 L284.4 304.7 L282.9 306.1 L281.3 307.6 L279.8 309.2 L278.2 311.1 L276.5 313.3 L274.4 316.3 L272.2 319.7 L272.8 318.5 L275.1 314.1 L277.6 309.2 L280.0 303.8 L282.5 297.9 L284.9 291.6 L287.2 285.0 L292.9 264.2 L296.1 243.7 L296.6 225.0 L294.8 208.0 L291.0 193.4 L285.3 182.1 L278.2 175.0 L270.5 172.5 L262.8 175.0 L255.7 182.1 L250.0 193.4 L246.2 208.0 L244.4 225.0 L244.9 243.7 L248.1 264.2 L253.8 285.0 L256.1 291.6 L258.5 297.9 L261.0 303.8 L263.4 309.2 L265.9 314.1 L268.2 318.5 L268.8 319.7 L266.6 316.3 L264.5 313.3 L262.8 311.1 L261.2 309.2 L259.7 307.6 L258.1 306.1 L256.6 304.7 L255.1 303.5 L253.6 302.4 L252.2 301.4 L250.7 300.5 L249.1 299.6 L247.6 298.8 L246.4 298.4 L245.3 298.2 L244.5 298.3 L243.9 298.5 L243.4 298.9 L243.1 299.5 L242.8 300.1 L242.7 300.8 L242.7 301.5 L242.8 302.4 L243.0 303.2 L243.3 304.1 L243.6 305.1 L244.1 306.0 L244.6 307.0 L245.2 307.9 L245.9 308.8 L246.6 309.8 L247.4 310.7 L248.4 311.7 L249.5 312.7 L250.8 313.7 L252.2 314.7 L253.6 315.7 L255.0 316.6 L256.6 317.4 L258.1 318.2 L259.5 318.9 L260.7 319.5 L261.9 320.0 L263.0 320.5 L263.9 320.9 L264.8 321.2 L265.6 321.5 L266.4 321.7 L267.2 321.9 L267.8 322.1 L268.4 322.2 L269.0 322.3 L269.4 322.4 L269.6 322.4 L269.9 322.5 L270.0 322.5 L270.2 322.5 L270.3 322.5 L270.5 322.5" fill="none" stroke="#ff0000" stroke-width="1.7" stroke-linejoin="round"/>
<path d="M270.5 322.5 L270.6 322.5 L270.7 322.5 L270.7 322.5 L270.8 322.5 L270.9 322.5 L270.9 322.5 L271.1 322.4 L271.2 322.4 L271.4 322.4 L271.6 322.3 L272.0 322.2 L272.4 322.1 L272.8 322.0 L273.4 321.8 L273.9 321.6 L274.5 321.3 L275.2 321.1 L275.9 320.7 L276.8 320.3 L277.8 319.8 L278.8 319.3 L279.7 318.8 L280.6 318.2 L281.5 317.6 L282.4 316.9 L283.3 316.2 L284.2 315.5 L285.0 314.8 L285.9 314.0 L286.7 313.1 L287.5 312.3 L288.1 311.5 L288.6 310.7 L289.0 310.0 L289.4 309.3 L289.7 308.6 L289.9 307.9 L290.1 307.2 L290.2 306.6 L290.3 305.9 L290.3 305.3 L290.2 304.8 L290.0 304.3 L289.7 303.9 L289.4 303.6 L289.0 303.3 L288.6 303.1 L288.1 303.0 L287.5 303.0 L286.8 303.1 L286.0 303.4 L285.1 303.8 L284.1 304.4 L283.1 305.1 L282.1 305.9 L281.1 306.7 L280.1 307.7 L279.1 308.7 L278.1 309.9 L277.0 311.3 L275.7 313.2 L273.9 316.2 L272.2 319.2 L272.9 317.6 L274.6 313.6 L276.4 309.4 L280.9 295.3 L284.0 281.1 L285.1 268.2 L284.6 256.3 L282.6 245.9 L279.4 237.8 L275.2 232.7 L270.5 230.9 L265.8 232.7 L261.6 237.8 L258.4 245.9 L256.4 256.3 L255.9 268.2 L257.0 281.1 L260.1 295.3 L264.6 309.4 L266.4 313.6 L268.1 317.6 L268.8 319.2 L267.1 316.2 L265.3 313.2 L264.0 311.3 L262.9 309.9 L261.9 308.7 L260.9 307.7 L259.9 306.7 L258.9 305.9 L257.9 305.1 L256.9 304.4 L255.9 303.8 L255.0 303.4 L254.2 303.1 L253.5 303.0 L252.9 303.0 L252.4 303.1 L252.0 303.3 L251.6 303.6 L251.3 303.9 L251.0 304.3 L250.8 304.8 L250.7 305.3 L250.7 305.9 L250.8 306.6 L250.9 307.2 L251.1 307.9 L251.3 308.6 L251.6 309.3 L252.0 310.0 L252.4 310.7 L252.9 311.5 L253.5 312.3 L254.3 313.1 L255.1 314.0 L256.0 314.8 L256.8 315.5 L257.7 316.2 L258.6 316.9 L259.5 317.6 L260.4 318.2 L261.3 318.8 L262.2 319.3 L263.2 319.8 L264.2 320.3 L265.1 320.7 L265.8 321.1 L266.5 321.3 L267.1 321.6 L267.6 321.8 L268.2 322.0 L268.6 322.1 L269.0 322.2 L269.4 322.3 L269.6 322.4 L269.8 322.4 L269.9 322.4 L270.1 322.5 L270.1 322.5 L270.2 322.5 L270.3 322.5 L270.3 322.5 L270.4 322.5 L270.5 322.5" fill="none" stroke="#4545b5" stroke-width="1.05" stroke-linejoin="round"/>
<path d="M270.5 322.5 L270.9 322.5 L271.2 322.5 L271.6 322.4 L272.1 322.4 L272.8 322.3 L273.8 322.2 L275.0 322.0 L276.3 321.7 L277.6 321.4 L278.9 321.0 L280.1 320.6 L281.3 320.2 L282.5 319.7 L283.7 319.2 L284.8 318.7 L286.0 318.1 L287.1 317.4 L288.4 316.7 L289.6 315.9 L290.8 315.1 L291.9 314.3 L293.0 313.4 L294.0 312.5 L294.9 311.6 L295.8 310.7 L296.7 309.7 L297.6 308.7 L298.6 307.6 L299.5 306.4 L300.5 305.2 L301.4 304.0 L302.1 302.7 L302.9 301.5 L303.5 300.2 L304.0 299.0 L304.4 297.9 L304.7 296.8 L304.8 295.7 L304.8 294.8 L304.5 294.0 L304.0 293.4 L303.5 292.8 L302.8 292.4 L302.0 292.1 L301.0 292.0 L299.6 292.4 L297.9 293.1 L296.2 294.0 L294.5 294.9 L292.7 296.0 L290.9 297.3 L289.0 298.8 L287.0 300.6 L285.0 302.5 L282.9 304.7 L280.8 307.3 L278.5 310.1 L276.2 313.3 L273.9 316.9 L273.9 316.6 L276.6 311.5 L279.3 306.0 L282.0 299.9 L284.7 293.5 L287.2 286.6 L289.6 279.5 L295.7 256.7 L299.5 233.4 L300.4 211.0 L298.6 190.2 L294.3 172.3 L287.7 158.5 L279.6 149.7 L270.5 146.7 L261.4 149.7 L253.3 158.5 L246.7 172.3 L242.4 190.2 L240.6 211.0 L241.5 233.4 L245.3 256.7 L251.4 279.5 L253.8 286.6 L256.3 293.5 L259.0 299.9 L261.7 306.0 L264.4 311.5 L267.1 316.6 L267.1 316.9 L264.8 313.3 L262.5 310.1 L260.2 307.3 L258.1 304.7 L256.0 302.5 L254.0 300.6 L252.0 298.8 L250.1 297.3 L248.3 296.0 L246.5 294.9 L244.8 294.0 L243.1 293.1 L241.4 292.4 L240.0 292.0 L239.0 292.1 L238.2 292.4 L237.5 292.8 L237.0 293.4 L236.5 294.0 L236.2 294.8 L236.2 295.7 L236.3 296.8 L236.6 297.9 L237.0 299.0 L237.5 300.2 L238.1 301.5 L238.9 302.7 L239.6 304.0 L240.5 305.2 L241.5 306.4 L242.4 307.6 L243.4 308.7 L244.3 309.7 L245.2 310.7 L246.1 311.6 L247.0 312.5 L248.0 313.4 L249.1 314.3 L250.2 315.1 L251.4 315.9 L252.6 316.7 L253.9 317.4 L255.0 318.1 L256.2 318.7 L257.3 319.2 L258.5 319.7 L259.7 320.2 L260.9 320.6 L262.1 321.0 L263.4 321.4 L264.7 321.7 L266.0 322.0 L267.2 322.2 L268.2 322.3 L268.9 322.4 L269.4 322.4 L269.8 322.5 L270.1 322.5 L270.5 322.5" fill="none" stroke="#45a545" stroke-width="1.05" stroke-linejoin="round"/>
<text x="268.3" y="111" font-size="11.5" text-anchor="middle" fill="#111">pmom_pattern_pattern_polar_zx</text>
</svg>
<div class="abs" id="legend"></div>
<div class="abs cb" style="left:517px;top:147px"></div><div class="abs cb" style="left:517px;top:159px"></div><div class="abs cb" style="left:517px;top:171px"></div>
<svg class="abs" style="left:517px;top:147px" width="8" height="32" viewBox="0 0 8 32"><path d="M1.8 3.6 L3.4 5.4 L6.2 1.8 M1.8 15.6 L3.4 17.4 L6.2 13.8 M1.8 27.8 L3.4 29.6 L6.2 26" fill="none" stroke="#000" stroke-width="1.3"/></svg>
<div class="abs" style="left:528.3px;top:149.8px;width:12.4px;height:1.6px;background:#ff0000"></div>
<div class="abs" style="left:528.3px;top:162.3px;width:12.4px;height:1px;background:#6868c0"></div>
<div class="abs" style="left:528.3px;top:174.2px;width:12.4px;height:1px;background:#62b862"></div>
<div class="abs" style="left:545.20px;top:147.01px;font-size:7.90px;line-height:1;white-space:nowrap;transform-origin:0 0;transform:scaleX(0.9974);color:#ff2a2a;">mag_e_theta</div>
<div class="abs" style="left:545.20px;top:158.91px;font-size:7.90px;line-height:1;white-space:nowrap;transform-origin:0 0;transform:scaleX(1.0232);color:#3434a4;">mag_e_phi</div>
<div class="abs" style="left:545.20px;top:171.21px;font-size:7.90px;line-height:1;white-space:nowrap;transform-origin:0 0;transform:scaleX(1.0004);color:#309030;">mag_e_total</div>
<div class="abs" id="tblhead"></div>
<div class="abs" id="tblrow"></div>
<div class="abs" style="left:51.00px;top:550.90px;font-size:7.80px;line-height:1;white-space:nowrap;transform-origin:0 0;transform:scaleX(1.0188);font-weight:bold;color:#111;">X-Cursor</div>
<div class="abs" style="left:136.25px;top:550.90px;font-size:7.80px;line-height:1;white-space:nowrap;transform-origin:0 0;transform:scaleX(1.0170);font-weight:bold;color:#111;">Y-Cursor</div>
<div class="abs" style="left:219.50px;top:550.90px;font-size:7.80px;line-height:1;white-space:nowrap;transform-origin:0 0;transform:scaleX(1.0647);font-weight:bold;color:#111;">V-Caliper</div>
<div class="abs" style="left:302.20px;top:550.90px;font-size:7.80px;line-height:1;white-space:nowrap;transform-origin:0 0;transform:scaleX(1.0345);font-weight:bold;color:#111;">H-Cal (dX)</div>
<div class="abs" style="left:382.50px;top:550.90px;font-size:7.80px;line-height:1;white-space:nowrap;transform-origin:0 0;transform:scaleX(1.0587);font-weight:bold;color:#111;">H-Cal (1/dX)</div>
<div class="abs" style="left:477.60px;top:550.90px;font-size:7.80px;line-height:1;white-space:nowrap;transform-origin:0 0;transform:scaleX(1.0171);font-weight:bold;color:#111;">Horz-D</div>
<div class="abs" style="left:562.90px;top:550.90px;font-size:7.80px;line-height:1;white-space:nowrap;transform-origin:0 0;transform:scaleX(1.0707);font-weight:bold;color:#111;">Vert-D</div>
<div class="abs cs" style="left:110px"></div><div class="abs cs" style="left:194px"></div><div class="abs cs" style="left:279px"></div><div class="abs cs" style="left:363px"></div><div class="abs cs" style="left:447px"></div><div class="abs cs" style="left:532px"></div><div class="abs cs" style="left:616px"></div>
<div class="abs" id="status"></div>
<svg class="abs" style="left:615px;top:586px" width="8" height="8" viewBox="0 0 8 8"><g fill="#c4c4c4"><rect x="6" y="0.5" width="1.3" height="1.3"/><rect x="3.5" y="3" width="1.3" height="1.3"/><rect x="6" y="3" width="1.3" height="1.3"/><rect x="1" y="5.5" width="1.3" height="1.3"/><rect x="3.5" y="5.5" width="1.3" height="1.3"/><rect x="6" y="5.5" width="1.3" height="1.3"/></g></svg>
</body></html>
